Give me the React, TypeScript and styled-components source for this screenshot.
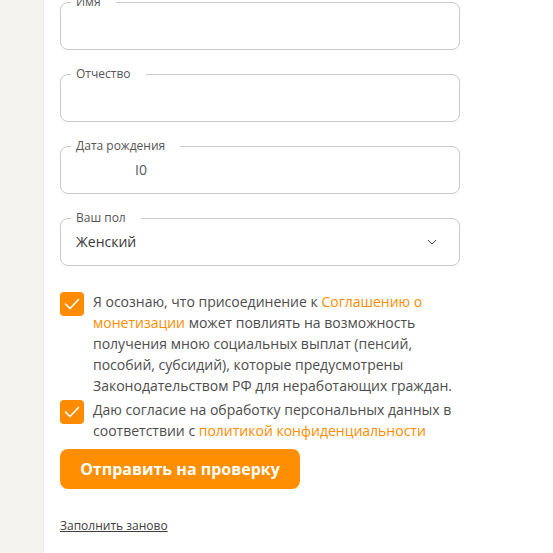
import React from 'react';
import styled, { createGlobalStyle } from 'styled-components';

const GlobalStyle = createGlobalStyle`
  body {
    margin: 0;
    background: #ffffff;
    font-family: 'Open Sans', 'Liberation Sans', sans-serif;
  }
`;

const Page = styled.div`
  display: flex;
  min-height: 100vh;
`;

const Sidebar = styled.div`
  width: 43px;
  flex-shrink: 0;
  background-color: #f4f3ef;
  border-right: 1px solid #ebe9e3;
`;

const Main = styled.div`
  padding: 2px 0 0 16px;
  width: 400px;
  display: flex;
  flex-direction: column;
`;

const Field = styled.div`
  position: relative;
  height: 48px;
  box-sizing: border-box;
  border: 1px solid #c9c9c9;
  border-radius: 8px;
  margin-bottom: 24px;
  display: flex;
  align-items: center;
  padding: 0 22px 0 15px;
`;

const Label = styled.span`
  position: absolute;
  top: -9px;
  left: 10px;
  padding: 0 15px 0 5px;
  background: #ffffff;
  font-size: 12px;
  line-height: 16px;
  color: #555555;
`;

const Value = styled.span<{ $indent?: number; $muted?: boolean }>`
  flex: 1;
  font-size: 14px;
  line-height: 20px;
  color: ${(p) => (p.$muted ? '#5a5a5a' : '#3a3a3a')};
  padding-left: ${(p) => p.$indent ?? 0}px;
`;

const Chevron = styled.svg`
  width: 10px;
  height: 6px;
  flex-shrink: 0;
`;

const CheckRow = styled.label<{ $top?: number }>`
  display: flex;
  align-items: flex-start;
  gap: 9px;
  margin-top: ${(p) => p.$top ?? 0}px;
`;

const Box = styled.span`
  width: 24px;
  height: 24px;
  flex-shrink: 0;
  margin-top: 1px;
  border-radius: 4px;
  background-color: #ff8c00;
  display: flex;
  align-items: center;
  justify-content: center;
`;

const CheckText = styled.span`
  font-size: 14px;
  line-height: 21px;
  color: #4d4d4d;
`;

const Link = styled.a`
  color: #ff8c00;
  text-decoration: none;
`;

const SubmitButton = styled.button`
  margin-top: 8px;
  width: 240px;
  height: 40px;
  border: none;
  border-radius: 8px;
  background-color: #ff8f00;
  color: #ffffff;
  font-family: 'Open Sans', 'Liberation Sans', sans-serif;
  font-size: 16px;
  font-weight: 700;
  cursor: pointer;
`;

const ResetLink = styled.a`
  margin-top: 28px;
  align-self: flex-start;
  font-size: 12px;
  line-height: 17px;
  color: #3d3d3d;
  text-decoration: underline;
`;

const Check = () => (
  <Box>
    <svg width="16" height="12" viewBox="0 0 16 12">
      <path d="M1.5 6 L6 10.5 L14.5 1.5" fill="none" stroke="#fff" strokeWidth="1.6" strokeLinecap="round" strokeLinejoin="round" />
    </svg>
  </Box>
);

export default function App() {
  return (
    <>
      <GlobalStyle />
      <Page>
        <Sidebar />
        <Main>
          <Field>
            <Label>Имя</Label>
            <Value />
          </Field>
          <Field>
            <Label>Отчество</Label>
            <Value />
          </Field>
          <Field>
            <Label>Дата рождения</Label>
            <Value $indent={59} $muted>I0</Value>
          </Field>
          <Field>
            <Label>Ваш пол</Label>
            <Value>Женский</Value>
            <Chevron viewBox="0 0 10 6">
              <path d="M1 1 L5 5 L9 1" fill="none" stroke="#555" strokeWidth="1" />
            </Chevron>
          </Field>

          <CheckRow $top={1}>
            <Check />
            <CheckText>
              Я осознаю, что присоединение к <Link href="#">Соглашению о монетизации</Link> может повлиять на
              возможность получения мною социальных выплат (пенсий, пособий, субсидий), которые предусмотрены
              Законодательством РФ для неработающих граждан.
            </CheckText>
          </CheckRow>
          <CheckRow $top={3}>
            <Check />
            <CheckText>
              Даю согласие на обработку персональных данных в соответствии с{' '}
              <Link href="#">политикой конфиденциальности</Link>
            </CheckText>
          </CheckRow>

          <SubmitButton>Отправить на проверку</SubmitButton>
          <ResetLink href="#">Заполнить заново</ResetLink>
        </Main>
      </Page>
    </>
  );
}
